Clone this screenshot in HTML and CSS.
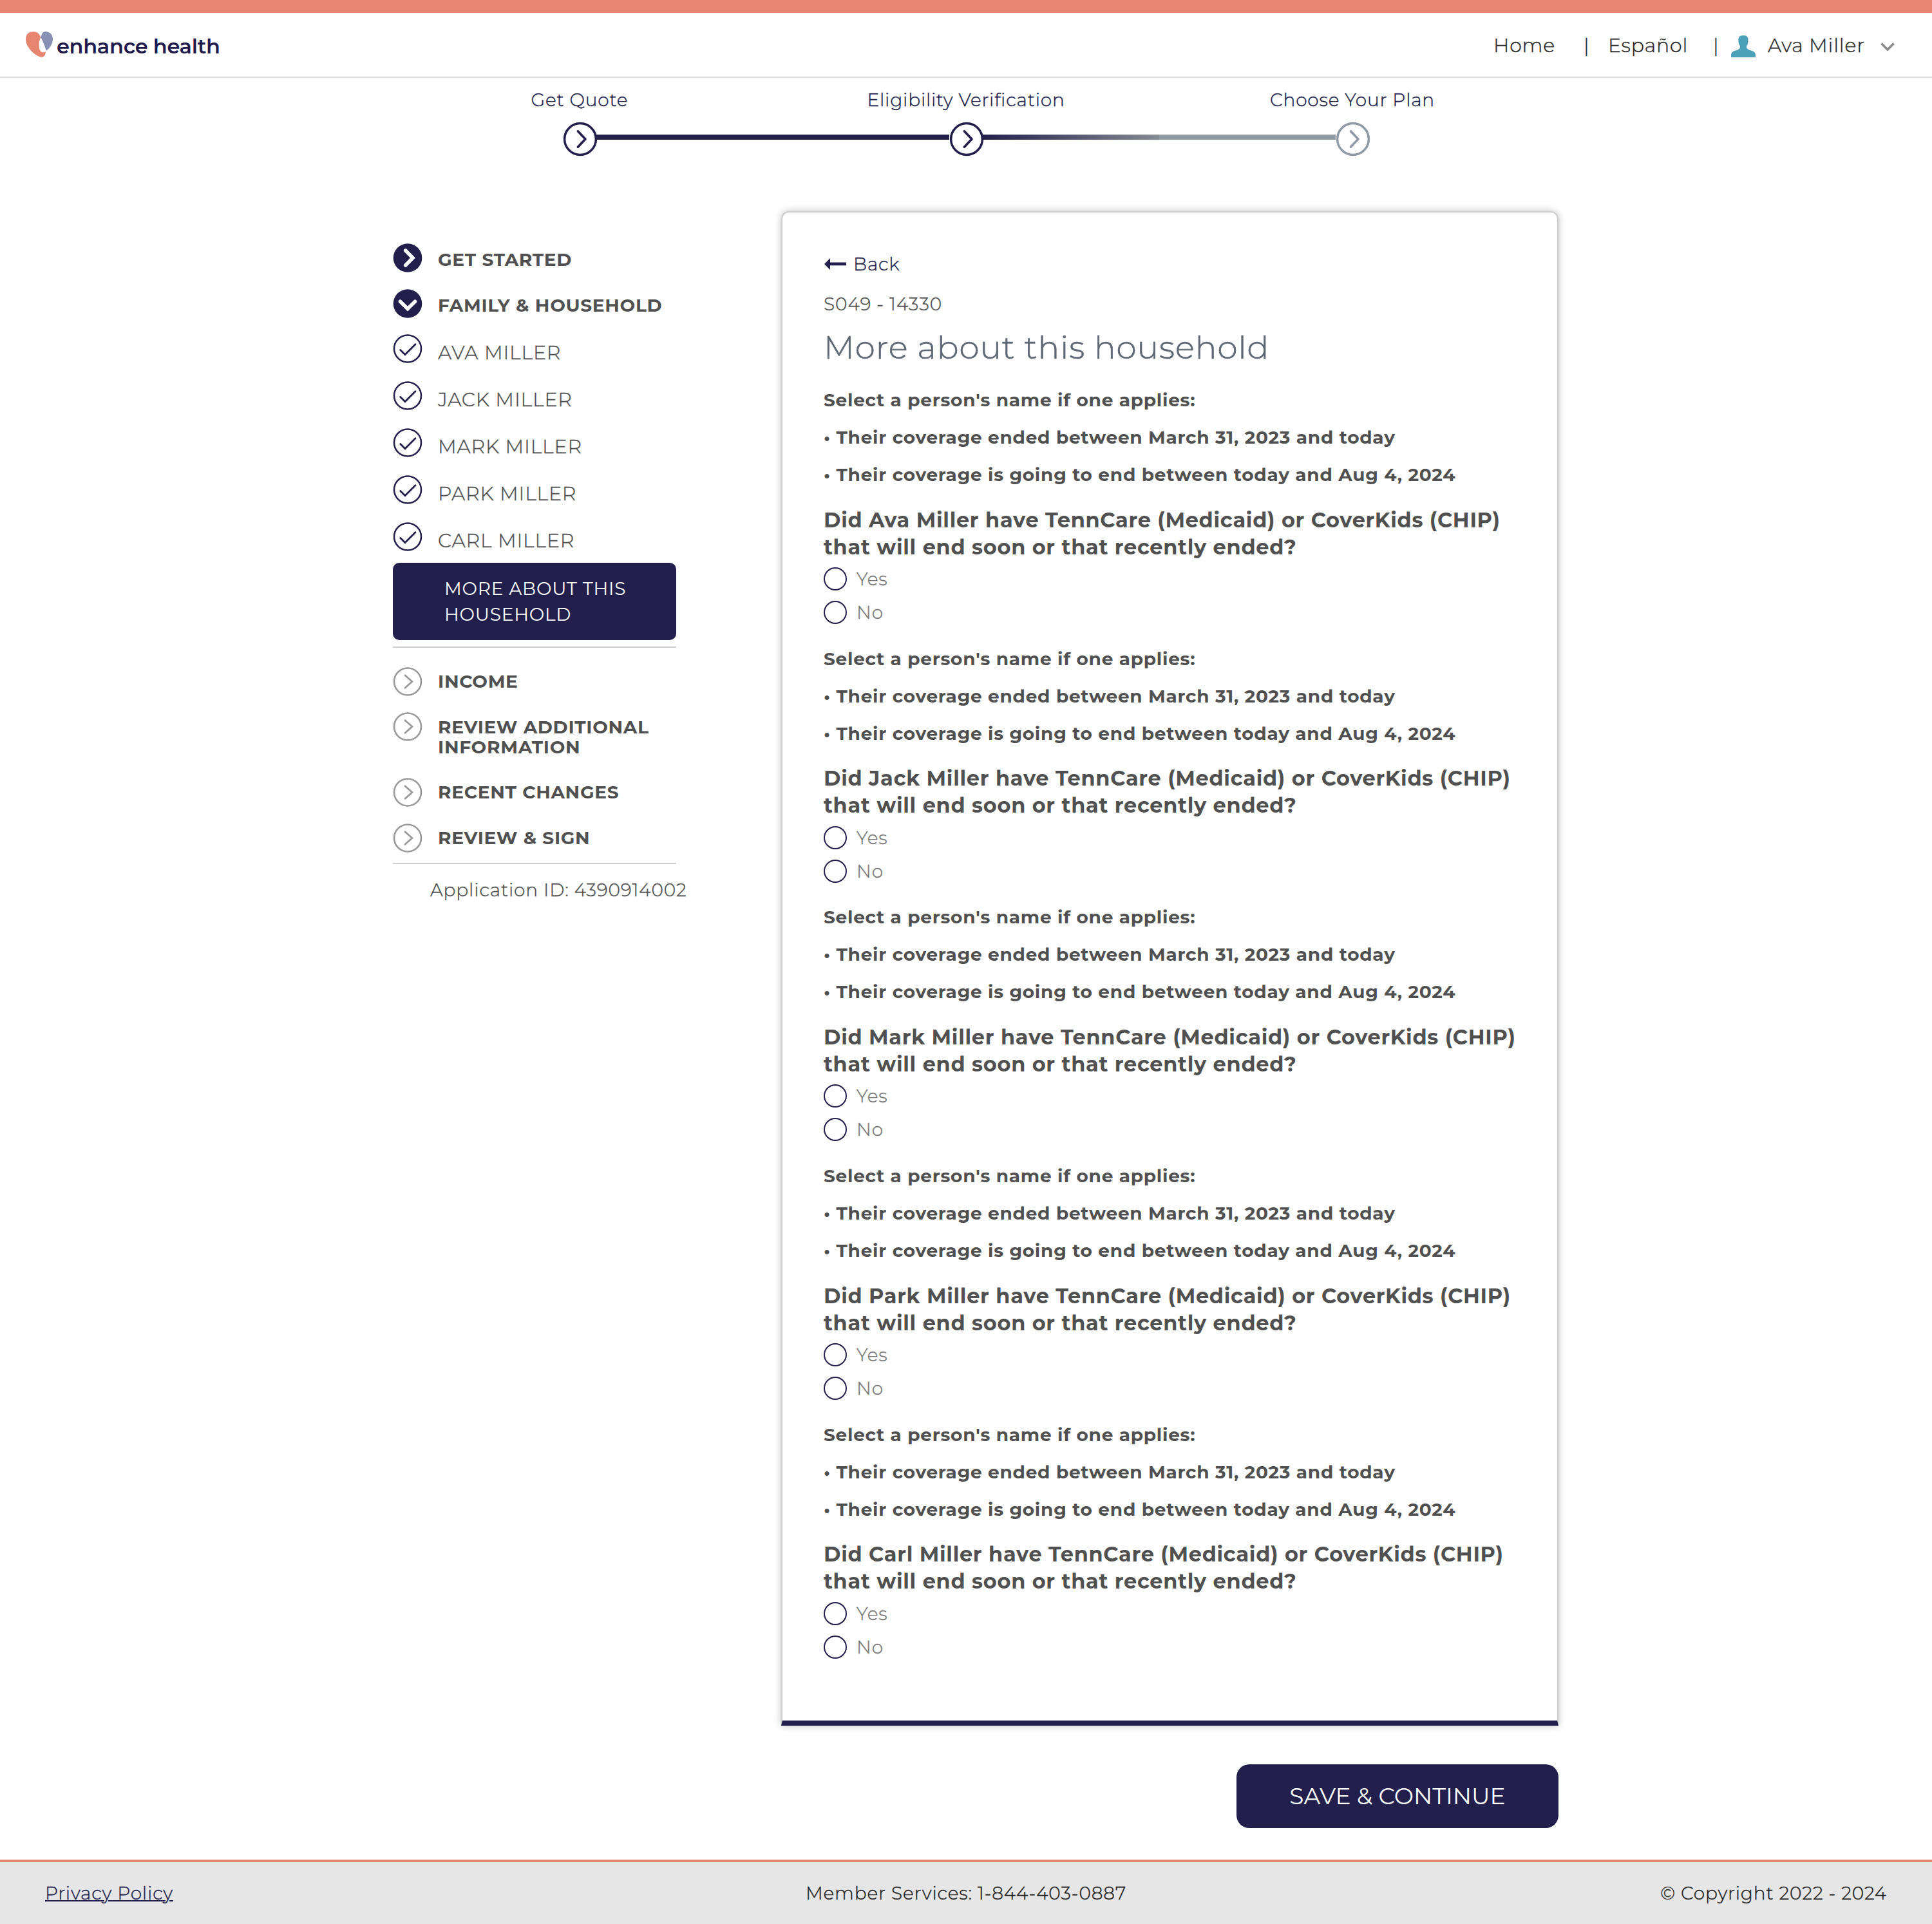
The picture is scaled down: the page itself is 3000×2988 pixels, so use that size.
FILE: index.html
```html
<!DOCTYPE html>
<html lang="en">
<head>
<meta charset="utf-8">
<title>Enhance Health - More about this household</title>
<link rel="stylesheet" href="styles.css">
</head>
<body>
<svg width="0" height="0" class="defs" aria-hidden="true">
  <symbol id="step" viewBox="-27 -27 54 54"><circle r="24.4" fill="#fff" stroke="currentColor" stroke-width="3.5"/><path d="M-3.6-12.2 8 0-3.6 12.2" fill="none" stroke="currentColor" stroke-width="3.6" stroke-linecap="round" stroke-linejoin="round"/></symbol>
  <symbol id="solid" viewBox="-22.5 -22.5 45 45"><circle r="22.3" fill="currentColor"/><path d="M-3.3-11.5 8 0-3.3 11.5" fill="none" stroke="#fff" stroke-width="5.6" stroke-linecap="round"/></symbol>
  <symbol id="solid-down" viewBox="-22.5 -22.5 45 45"><circle r="22.3" fill="currentColor"/><path d="M-11.5-3.3 0 8 11.5-3.3" fill="none" stroke="#fff" stroke-width="5.6" stroke-linecap="round"/></symbol>
  <symbol id="check" viewBox="-22.5 -22.5 45 45"><circle r="21" fill="none" stroke="currentColor" stroke-width="2.5"/><path d="M-11.3 2-4 9.2 12-6.8" fill="none" stroke="currentColor" stroke-width="2.8" stroke-linecap="round"/></symbol>
  <symbol id="next" viewBox="-22.5 -22.5 45 45"><circle r="21" fill="none" stroke="currentColor" stroke-width="2.6"/><path d="M-4-9.8 7 0-4 9.8" fill="none" stroke="currentColor" stroke-width="2.7" stroke-linecap="round"/></symbol>
</svg>

<header class="header">
  <div class="logo">
    <svg class="logo-mark" viewBox="0 0 132 126"><path fill="#e68570" d="M3 40C3 12 20 4 38 4 56 4 68 14 73 31 68 38 64 54 65 70 66 90 72 100 82 100 88 100 93 98 95 96 96 108 92 122 76 122 50 120 3 78 3 40Z"/><path fill="#8890b5" d="M95 3C115 3 129 18 129 38 129 62 112 84 98 92 95 78 86 55 74 32 76 14 82 3 95 3Z"/></svg>
    <span class="logo-text">enhance health</span>
  </div>
  <nav class="nav">
    <a>Home</a><span class="sep">|</span><a>Español</a><span class="sep">|</span>
    <svg class="person" viewBox="0 0 38 34"><path fill="#4ba0b9" d="M19 0C25 0 27 3 26.500 8 27 12 25 15 24 17 24 20 25 21 28 22.500 34 24.500 38 25 38 31V34H0V31C0 25 4 24.500 10 22.500 13 21 14 20 14 17 13 15 11 12 11.500 8 11 3 13 0 19 0Z"/></svg>
    <a>Ava Miller</a>
    <svg class="caret" viewBox="0 0 22 13"><path d="M1.500 1.500 11 11 20.500 1.500" fill="none" stroke="#8c8c8c" stroke-width="3.800"/></svg>
  </nav>
</header>

<section class="stepper">
  <div class="step-labels"><span>Get Quote</span><span>Eligibility Verification</span><span>Choose Your Plan</span></div>
  <div class="step-track">
    <svg class="step"><use href="#step"/></svg><i class="bar"></i>
    <svg class="step"><use href="#step"/></svg><i class="bar partial"></i>
    <svg class="step pending"><use href="#step"/></svg>
  </div>
</section>

<main class="main">
  <aside class="sidebar">
    <ul class="group top">
      <li><svg><use href="#solid"/></svg><span>GET STARTED</span></li>
      <li><svg><use href="#solid-down"/></svg><span>FAMILY &amp; HOUSEHOLD</span></li>
    </ul>
    <ul class="group people">
      <li><svg><use href="#check"/></svg><span>AVA MILLER</span></li>
      <li><svg><use href="#check"/></svg><span>JACK MILLER</span></li>
      <li><svg><use href="#check"/></svg><span>MARK MILLER</span></li>
      <li><svg><use href="#check"/></svg><span>PARK MILLER</span></li>
      <li><svg><use href="#check"/></svg><span>CARL MILLER</span></li>
    </ul>
    <div class="current">MORE ABOUT THIS HOUSEHOLD</div>
    <ul class="group upcoming">
      <li><svg><use href="#next"/></svg><span>INCOME</span></li>
      <li><svg><use href="#next"/></svg><span>REVIEW ADDITIONAL INFORMATION</span></li>
      <li><svg><use href="#next"/></svg><span>RECENT CHANGES</span></li>
      <li><svg><use href="#next"/></svg><span>REVIEW &amp; SIGN</span></li>
    </ul>
    <p class="app-id">Application ID: 4390914002</p>
  </aside>

  <div class="content">
    <section class="card">
      <a class="back"><svg viewBox="0 0 34 18"><path fill="currentColor" d="M0 9 9 0V6.600H34V11.300H9V18Z"/></svg>Back</a>
      <p class="code">S049 - 14330</p>
      <h1>More about this household</h1>
      <div class="block">
        <p>Select a person's name if one applies:</p><p>• Their coverage ended between March 31, 2023 and today</p><p>• Their coverage is going to end between today and Aug 4, 2024</p>
        <h2>Did Ava Miller have TennCare (Medicaid) or CoverKids (CHIP) that will end soon or that recently ended?</h2>
        <label><i></i>Yes</label><label><i></i>No</label>
      </div>
      <div class="block">
        <p>Select a person's name if one applies:</p><p>• Their coverage ended between March 31, 2023 and today</p><p>• Their coverage is going to end between today and Aug 4, 2024</p>
        <h2>Did Jack Miller have TennCare (Medicaid) or CoverKids (CHIP) that will end soon or that recently ended?</h2>
        <label><i></i>Yes</label><label><i></i>No</label>
      </div>
      <div class="block">
        <p>Select a person's name if one applies:</p><p>• Their coverage ended between March 31, 2023 and today</p><p>• Their coverage is going to end between today and Aug 4, 2024</p>
        <h2>Did Mark Miller have TennCare (Medicaid) or CoverKids (CHIP) that will end soon or that recently ended?</h2>
        <label><i></i>Yes</label><label><i></i>No</label>
      </div>
      <div class="block">
        <p>Select a person's name if one applies:</p><p>• Their coverage ended between March 31, 2023 and today</p><p>• Their coverage is going to end between today and Aug 4, 2024</p>
        <h2>Did Park Miller have TennCare (Medicaid) or CoverKids (CHIP) that will end soon or that recently ended?</h2>
        <label><i></i>Yes</label><label><i></i>No</label>
      </div>
      <div class="block">
        <p>Select a person's name if one applies:</p><p>• Their coverage ended between March 31, 2023 and today</p><p>• Their coverage is going to end between today and Aug 4, 2024</p>
        <h2>Did Carl Miller have TennCare (Medicaid) or CoverKids (CHIP) that will end soon or that recently ended?</h2>
        <label><i></i>Yes</label><label><i></i>No</label>
      </div>
    </section>
    <button class="save">SAVE &amp; CONTINUE</button>
  </div>
</main>

<footer class="footer">
  <a>Privacy Policy</a><span>Member Services: 1-844-403-0887</span><span class="copyright">© Copyright 2022 - 2024</span>
</footer>
</body>
</html>
```
FILE: styles.css
```css
* { box-sizing: border-box; margin: 0; padding: 0; }

body {
  width: 3000px;
  height: 2988px;
  display: flex;
  flex-direction: column;
  background: #fff;
  color: #505050;
  font: 300 28px/34px Montserrat, Inter, "Open Sans", sans-serif;
  letter-spacing: 0.85px;
  -webkit-text-stroke: 0.4px currentColor;
}

svg { display: block; flex: none; }
ul { list-style: none; }
.defs { position: absolute; }

/* Header */
.header {
  height: 121px;
  flex: none;
  display: flex;
  justify-content: space-between;
  border-top: 20px solid #e68570;
  border-bottom: 2px solid #d9d9d9;
  padding: 0 58px 0 39px;
}
.logo { display: flex; align-items: center; gap: 5px; }
.logo-mark { width: 44px; height: 42px; margin-top: -1px; }
.logo-text {
  color: #1f1a4c;
  font-size: 32px;
  font-weight: 600;
  line-height: 40px;
  letter-spacing: -0.3px;
  padding-top: 4px;
  -webkit-text-stroke: 0;
}
.nav {
  display: grid;
  grid-template-columns: 141px 36px 165px 27px 57px 175px 22px;
  align-items: center;
  color: #2b2b2b;
  font-size: 30px;
  letter-spacing: 0.8px;
}
.nav a, .sep { padding-top: 2px; }
.nav .sep + a { padding-left: 1px; }
.sep { margin-left: -1px; }
.person { width: 38px; height: 34px; margin-top: 5px; }
.caret { width: 22px; height: 13px; margin-top: 6px; }

/* Stepper */
.stepper { height: 207px; flex: none; padding-top: 17px; color: #221f4d; }
.step-labels {
  display: grid;
  grid-template-columns: repeat(3, 600px);
  justify-content: center;
  text-align: center;
  letter-spacing: 0.8px;
}
.step-track { display: flex; align-items: flex-start; width: 1254px; margin: 17px 0 0 874px; }
.step { width: 54px; height: 54px; }
.pending { color: #8f9aa5; }
.bar { flex: 1; height: 8px; margin: 20px 0 0 -2px; background: #221f4d; }
.bar.partial { background: linear-gradient(90deg, #221f4d 0, #848c93 50%, #8f9aa5 50%); }

/* Main */
.main { display: flex; gap: 163px; padding-left: 610px; flex: 1; }

.sidebar { width: 440px; flex: none; padding-top: 50px; }
.group { display: flex; flex-direction: column; }
.top, .upcoming { font-weight: 700; letter-spacing: 0.7px; -webkit-text-stroke: 0; }
.group li { display: flex; align-items: flex-start; gap: 24px; }
.group svg { width: 46px; height: 45px; color: #221f4d; }
.top { gap: 26px; }
.top li { height: 45px; }
.top span { padding-top: 7.5px; }
.people { margin-top: 25px; gap: 28px; font-size: 30px; line-height: 35px; }
.people li { height: 45px; }
.people span { padding-top: 10.5px; }
.current {
  height: 119.5px;
  margin-top: 18px;
  padding: 20px 60px 0 80px;
  border-radius: 10px;
  background: #221f4d;
  color: #fff;
  font-weight: 400;
  line-height: 40px;
  letter-spacing: 0.75px;
  -webkit-text-stroke: 0;
}
.upcoming {
  margin-top: 10.5px;
  padding: 30px 0 16px;
  gap: 25px;
  border-top: 2px solid #d0d0d0;
  border-bottom: 2px solid #d0d0d0;
  line-height: 31.4px;
}
.upcoming svg { color: #999; }
.upcoming span { padding: 7.2px 0 6.8px; }
.app-id { margin-top: 23px; padding-left: 58px; white-space: nowrap; }

/* Card */
.content { width: 1207px; display: flex; flex-direction: column; align-items: flex-end; }
.card {
  width: 100%;
  flex: none;
  height: 2352px;
  padding: 63px 58px 0 64px;
  border: 2px solid #ccc;
  border-bottom: 8px solid #221f4d;
  border-radius: 12px 12px 0 0;
  background: #fff;
  box-shadow: 0 0 12px rgba(0, 0, 0, 0.25);
}
.back { display: flex; align-items: center; gap: 11px; padding-left: 1px; color: #221f4d; }
.back svg { width: 34px; height: 18px; }
.code { margin-top: 28px; letter-spacing: 0.95px; }
h1 { margin-top: 21px; color: #5e6874; font-size: 50px; font-weight: 300; line-height: 60px; letter-spacing: 1px; -webkit-text-stroke: 0.6px currentColor; }
.block { margin-bottom: 24.7px; }
h1 + .block { margin-top: 22px; }
.block p, .block h2 { font-weight: 700; letter-spacing: 0.73px; -webkit-text-stroke: 0; }
.block p { line-height: 58px; }
.block h2 { margin-top: 20.5px; font-size: 32px; line-height: 42px; letter-spacing: 0.7px; }
.block label { display: flex; align-items: center; gap: 15px; height: 36px; margin-top: 16px; color: #777; }
.block h2 + label { margin-top: 10.5px; }
.block i { width: 36px; height: 36px; border: 2px solid #221f4d; border-radius: 50%; }

.save {
  width: 500px;
  height: 99px;
  margin-top: 60px;
  padding-bottom: 2px;
  border: 0;
  border-radius: 20px;
  background: #221f4d;
  color: #fff;
  font: 400 36px/44px Montserrat, Inter, "Open Sans", sans-serif;
  letter-spacing: 0;
  -webkit-text-stroke: 0;
}

/* Footer */
.footer {
  height: 100px;
  flex: none;
  display: grid;
  grid-template-columns: 1fr auto 1fr;
  align-items: center;
  padding: 0 70px;
  border-top: 4px solid #e68570;
  background: #e6e6e6;
  color: #222;
}
.footer a { color: #221f4d; text-decoration: underline; text-decoration-thickness: 2px; }
.copyright { text-align: right; }
```
